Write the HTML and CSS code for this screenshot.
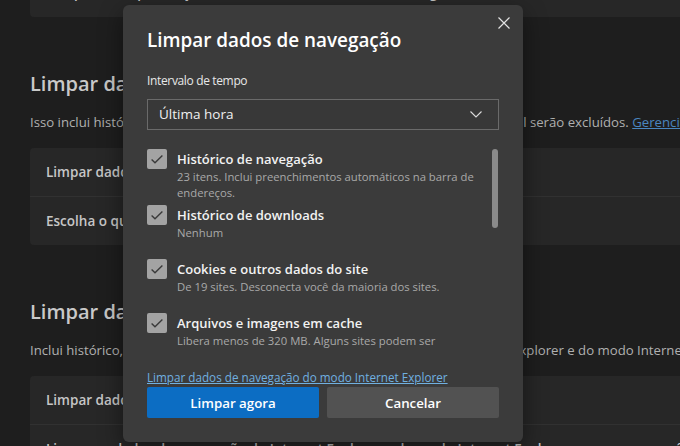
FILE: index.html
```html
<!DOCTYPE html>
<html lang="pt-BR">
<head>
<meta charset="utf-8">
<title>Limpar dados de navegação</title>
<link rel="stylesheet" href="styles.css">
</head>
<body>
<main class="page">
  <section class="card top-card">
    <div class="row"><span class="row-title">Sempre use a prevenção de rastreamento “Estrita” ao navegar InPrivate</span></div>
  </section>

  <h2 class="section-title">Limpar dados de navegação</h2>
  <p class="section-desc">Isso inclui histórico, senhas, cookies e muito mais. Somente os dados deste perfil serão excluídos. <a class="bg-link" href="#">Gerenciar seus dados</a></p>
  <section class="card">
    <div class="row"><span class="row-title">Limpar dados de navegação agora</span></div>
    <div class="row"><span class="row-title">Escolha o que limpar sempre que fechar o navegador</span></div>
  </section>

  <h2 class="section-title">Limpar dados de navegação do Internet Explorer</h2>
  <p class="section-desc">Inclui histórico, cookies, senhas e mais dados de navegação salvos no Internet Explorer e do modo Internet Explorer no Microsoft Edge</p>
  <section class="card">
    <div class="row"><span class="row-title">Limpar dados de navegação agora</span></div>
    <div class="row"><span class="row-title">Limpar os dados de navegação do Internet Explorer e do modo Internet Explorer sempre que você fechar o Microsoft Edge</span></div>
  </section>
</main>

<div class="dialog" role="dialog" aria-label="Limpar dados de navegação">
  <button class="close" aria-label="Fechar">
    <svg width="12" height="12" viewBox="0 0 12 12"><path d="M0.5 0.5 L11.5 11.5 M11.5 0.5 L0.5 11.5" stroke="#e2e2e2" stroke-width="1.2" fill="none"/></svg>
  </button>
  <h1 class="dialog-title">Limpar dados de navegação</h1>
  <div class="field-label">Intervalo de tempo</div>
  <div class="select">
    <span>Última hora</span>
    <svg class="chevron" width="12" height="7" viewBox="0 0 12 7"><path d="M0.5 0.5 L6 6 L11.5 0.5" stroke="#dcdcdc" stroke-width="1.1" fill="none"/></svg>
  </div>

  <div class="scroll">
    <div class="item">
      <span class="check"><svg width="20" height="20" viewBox="0 0 20 20"><path d="M4.6 10.4 L8 13.8 L15.4 6.4" stroke="#3a3a3a" stroke-width="1.4" fill="none"/></svg></span>
      <div class="item-text">
        <div class="item-title">Histórico de navegação</div>
        <div class="item-desc">23 itens. Inclui preenchimentos automáticos na barra de endereços.</div>
      </div>
    </div>
    <div class="item">
      <span class="check"><svg width="20" height="20" viewBox="0 0 20 20"><path d="M4.6 10.4 L8 13.8 L15.4 6.4" stroke="#3a3a3a" stroke-width="1.4" fill="none"/></svg></span>
      <div class="item-text">
        <div class="item-title">Histórico de downloads</div>
        <div class="item-desc">Nenhum</div>
      </div>
    </div>
    <div class="item">
      <span class="check"><svg width="20" height="20" viewBox="0 0 20 20"><path d="M4.6 10.4 L8 13.8 L15.4 6.4" stroke="#3a3a3a" stroke-width="1.4" fill="none"/></svg></span>
      <div class="item-text">
        <div class="item-title">Cookies e outros dados do site</div>
        <div class="item-desc">De 19 sites. Desconecta você da maioria dos sites.</div>
      </div>
    </div>
    <div class="item">
      <span class="check"><svg width="20" height="20" viewBox="0 0 20 20"><path d="M4.6 10.4 L8 13.8 L15.4 6.4" stroke="#3a3a3a" stroke-width="1.4" fill="none"/></svg></span>
      <div class="item-text">
        <div class="item-title">Arquivos e imagens em cache</div>
        <div class="item-desc">Libera menos de 320 MB. Alguns sites podem ser carregados mais lentamente na próxima visita.</div>
      </div>
    </div>
    <div class="thumb"></div>
  </div>

  <a class="ie-link" href="#">Limpar dados de navegação do modo Internet Explorer</a>
  <div class="actions">
    <button class="btn primary">Limpar agora</button>
    <button class="btn secondary">Cancelar</button>
  </div>
</div>
</body>
</html>
```

FILE: styles.css
```css
* { box-sizing: border-box; }

html, body {
  margin: 0;
  width: 680px;
  height: 446px;
  overflow: hidden;
  background: #1e1e1e;
  font-family: "Open Sans", "Noto Sans", sans-serif;
}

.page {
  width: 760px;
  padding-left: 30px;
  margin-top: -31px;
}

.card {
  background: #272727;
  border-radius: 4px;
}

.row {
  height: 48px;
  display: flex;
  align-items: center;
  padding-left: 16px;
  white-space: nowrap;
  overflow: hidden;
}

.row + .row {
  height: 49px;
  border-top: 1px solid #313131;
}

.row-title {
  font-size: 13.5px;
  font-weight: 600;
  color: #c6c6c6;
}

.section-title {
  margin: 53px 0 0;
  font-size: 20px;
  line-height: 28px;
  font-weight: 600;
  color: #c9c9c9;
  white-space: nowrap;
}

.section-desc {
  margin: 14px 0 16px;
  font-size: 13.2px;
  line-height: 20px;
  color: #b0b0b0;
  white-space: nowrap;
}

.bg-link {
  color: #4a86c0;
  text-decoration: underline;
}

/* dialog */
.dialog {
  position: absolute;
  left: 123px;
  top: 5px;
  width: 400px;
  padding: 21px 24px 24px;
  background: #3b3b3b;
  border-radius: 6px;
  box-shadow: 0 8px 24px rgba(0, 0, 0, 0.45);
}

.close {
  position: absolute;
  right: 13px;
  top: 12px;
  width: 12px;
  height: 12px;
  padding: 0;
  border: 0;
  background: none;
  display: block;
}
.close svg { display: block; }

.dialog-title {
  margin: 0;
  font-size: 18.9px;
  line-height: 28px;
  font-weight: 600;
  color: #ffffff;
}

.field-label {
  margin-top: 18px;
  font-size: 12px;
  letter-spacing: -0.35px;
  line-height: 18px;
  color: #e8e8e8;
}

.select {
  margin-top: 9px;
  height: 31px;
  border: 1px solid #6a6a6a;
  background: #383838;
  display: flex;
  align-items: center;
  justify-content: space-between;
  padding: 0 16px 0 11px;
  font-size: 13.5px;
  line-height: 29px;
  color: #f0f0f0;
}
.chevron { display: block; }

.scroll {
  position: relative;
  margin-top: 19px;
  height: 200px;
  overflow: hidden;
}

.item {
  display: flex;
  gap: 10px;
  min-height: 54px;
  padding-bottom: 4px;
  padding-right: 14px;
}

.check {
  flex: none;
  width: 20px;
  height: 20px;
  border-radius: 2px;
  background: #a3a3a3;
}
.check svg { display: block; }

.item-title {
  font-size: 13px;
  line-height: 20px;
  font-weight: 600;
  color: #f2f2f2;
}

.item-desc {
  font-size: 11.3px;
  line-height: 16px;
  color: #a9a9a9;
}

.thumb {
  position: absolute;
  right: 1px;
  top: 0;
  width: 6px;
  height: 79px;
  border-radius: 3px;
  background: #8a8a8a;
}

.ie-link {
  display: block;
  margin-top: 20px;
  font-size: 11.7px;
  line-height: 16px;
  color: #70b0e0;
  text-decoration: underline;
  white-space: nowrap;
}

.actions {
  margin-top: 2px;
  display: flex;
  gap: 8px;
}

.btn {
  flex: 1;
  height: 31px;
  border: 0;
  border-radius: 2px;
  font-family: inherit;
  font-size: 13.3px;
  font-weight: 600;
  color: #ffffff;
}
.primary { background: #0c6dc3; }
.secondary { background: #525252; }
```
